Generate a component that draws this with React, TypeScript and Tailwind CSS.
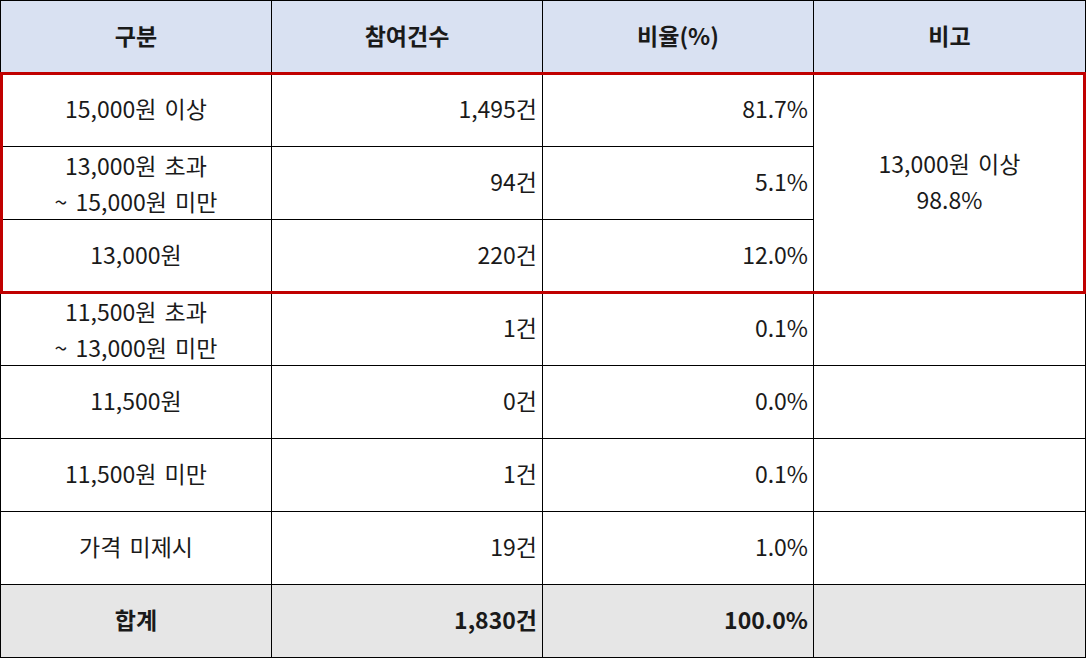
import React from "react";

const rows: { label: string[]; count: string; pct: string }[] = [
  { label: ["15,000원 이상"], count: "1,495건", pct: "81.7%" },
  { label: ["13,000원 초과", "~ 15,000원 미만"], count: "94건", pct: "5.1%" },
  { label: ["13,000원"], count: "220건", pct: "12.0%" },
  { label: ["11,500원 초과", "~ 13,000원 미만"], count: "1건", pct: "0.1%" },
  { label: ["11,500원"], count: "0건", pct: "0.0%" },
  { label: ["11,500원 미만"], count: "1건", pct: "0.1%" },
  { label: ["가격 미제시"], count: "19건", pct: "1.0%" },
];

export default function App() {
  const cell = "border border-black h-[73px] p-0 overflow-hidden";
  const one = "pb-[5px]";
  return (
    <div
      className="w-[1086px] h-[659px] bg-white text-[#1a1a1a] relative"
      style={{ fontFamily: '"Noto Sans CJK KR", "Noto Sans", sans-serif' }}
    >
      <table className="border-collapse table-fixed w-[1085px] text-[23px] leading-[36px] [word-spacing:3px]">
        <colgroup>
          <col className="w-[271px]" />
          <col className="w-[271px]" />
          <col className="w-[271px]" />
          <col className="w-[272px]" />
        </colgroup>
        <thead>
          <tr className="bg-[#d9e1f2]">
            <th className={`${cell} ${one} text-center font-bold`}>구분</th>
            <th className={`${cell} ${one} text-center font-bold`}>참여건수</th>
            <th className={`${cell} ${one} text-center font-bold`}>비율(%)</th>
            <th className={`${cell} ${one} text-center font-bold`}>비고</th>
          </tr>
        </thead>
        <tbody>
          {rows.map((r, i) => (
            <tr key={i}>
              <td className={`${cell} text-center ${r.label.length === 1 ? one : ""}`}>
                {r.label.map((l, j) => (
                  <div key={j}>{l}</div>
                ))}
              </td>
              <td className={`${cell} ${one} text-right pr-[5px]`}>{r.count}</td>
              <td className={`${cell} ${one} text-right pr-[5px]`}>{r.pct}</td>
              {i === 0 && (
                <td rowSpan={3} className={`${cell} pb-[4px] text-center`}>
                  <div>13,000원 이상</div>
                  <div>98.8%</div>
                </td>
              )}
              {i > 2 && <td className={cell}></td>}
            </tr>
          ))}
          <tr className="bg-[#e6e6e6] font-bold">
            <td className={`${cell} ${one} text-center`}>합계</td>
            <td className={`${cell} ${one} text-right pr-[5px]`}>1,830건</td>
            <td className={`${cell} ${one} text-right pr-[5px]`}>100.0%</td>
            <td className={cell}></td>
          </tr>
        </tbody>
      </table>
      <div className="absolute left-0 top-[72px] w-[1086px] h-[222px] border-[3px] border-[#c00000] pointer-events-none" />
    </div>
  );
}
